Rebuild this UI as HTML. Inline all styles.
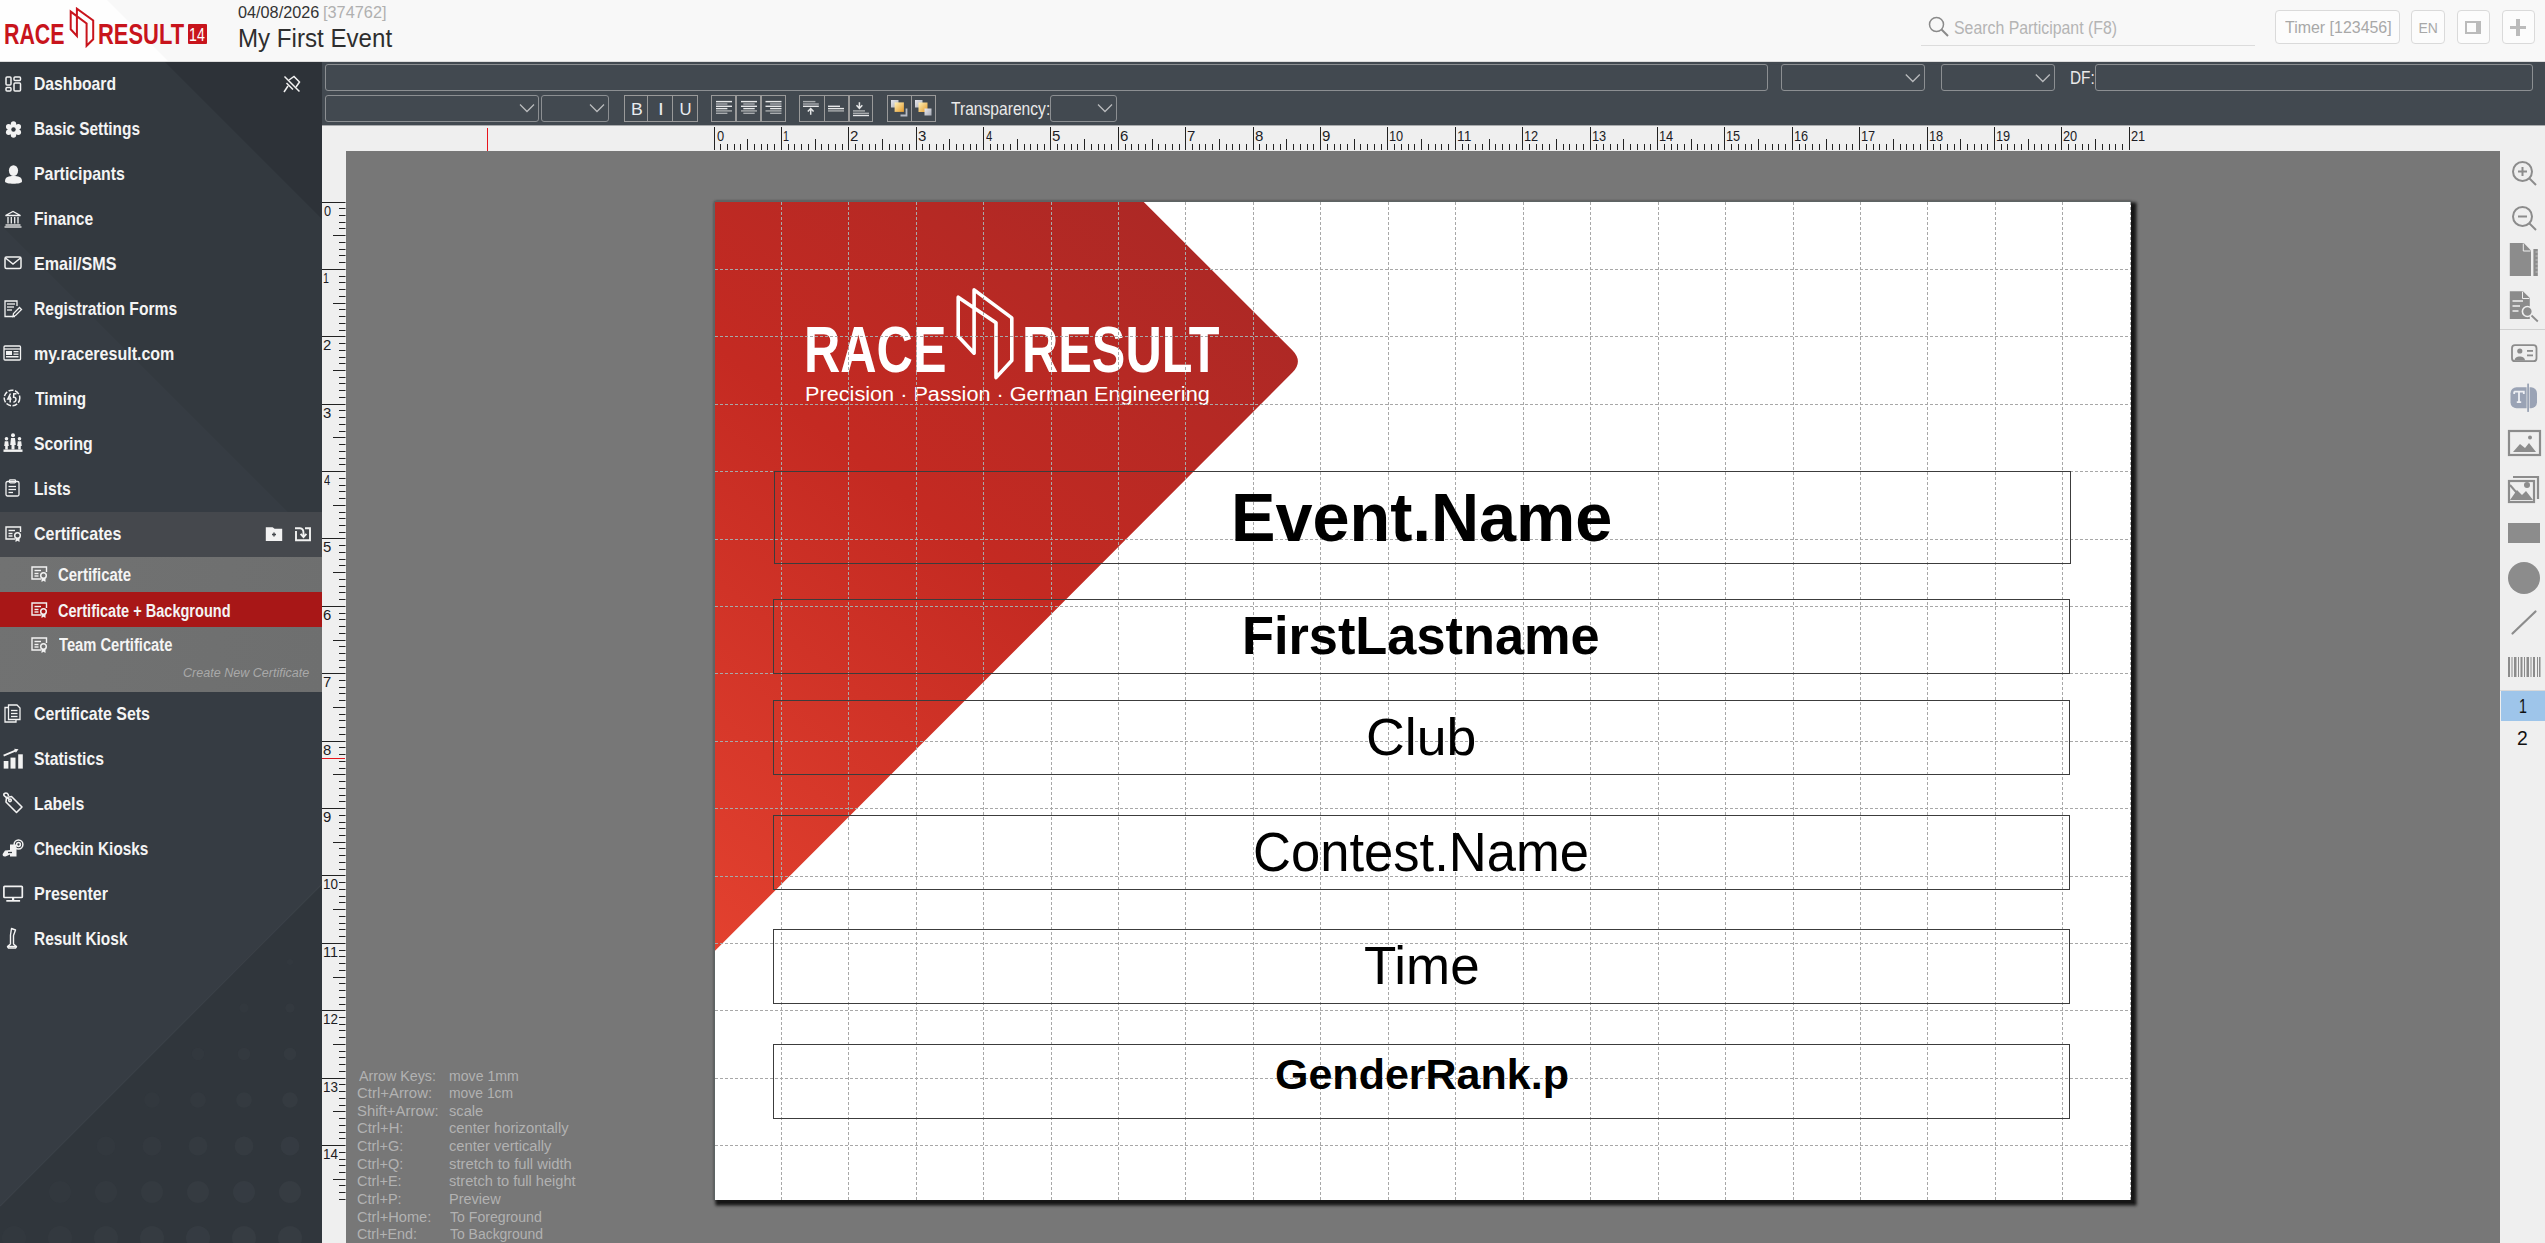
<!DOCTYPE html><html><head><meta charset="utf-8"><title>RACE RESULT</title><style>
*{margin:0;padding:0;box-sizing:border-box}
html,body{width:2545px;height:1243px;overflow:hidden;background:#777}
body{position:relative;font-family:"Liberation Sans",sans-serif}
.t{position:absolute;white-space:nowrap;line-height:1;transform-origin:0 0}
.a{position:absolute}
svg{position:absolute;overflow:visible}
</style></head><body>
<div class="a" style="left:0;top:0;width:2545px;height:62px;background:#f8f8f8;border-bottom:1px solid #dcdcdc"></div>
<svg style="left:0;top:0" width="1" height="1"><path d="M0,0 L107,0 L168,61 L0,61 Z" fill="#fefefe"/></svg>
<div class="t" style="left:3.82px;top:19.80px;font-size:28.78px;font-weight:bold;color:#c8141c;transform:scaleX(0.7418);">RACE</div>
<div class="t" style="left:97.78px;top:19.80px;font-size:28.78px;font-weight:bold;color:#c8141c;transform:scaleX(0.7622);">RESULT</div>
<div class="a" style="left:188px;top:24px;width:19px;height:20px;background:#c8141c;border-radius:1px"></div>
<div class="t" style="left:188.75px;top:26.00px;font-size:18.9px;color:#fff;transform:scaleX(0.7500);">14</div>
<svg style="left:0;top:0" width="1" height="1"><path d="M70.7,11.6 L70.7,29.3 L76.9,36 L76.9,8.6 L93.2,20.5 L93.2,39.3 L86.6,45.8 L86.6,23.5 Z" fill="none" stroke="#c8141c" stroke-width="2" stroke-linejoin="miter"/></svg>
<div class="t" style="left:237.92px;top:4.90px;font-size:16.57px;color:#333;transform:scaleX(0.9802);">04/08/2026</div>
<div class="t" style="left:323.01px;top:4.90px;font-size:16.57px;color:#b0b0b0;transform:scaleX(0.9855);">[374762]</div>
<div class="t" style="left:237.99px;top:25.20px;font-size:26.6px;color:#2e2e2e;transform:scaleX(0.9071);">My First Event</div>
<svg style="left:0;top:0" width="1" height="1"><circle cx="1936.5" cy="24.5" r="7" fill="none" stroke="#8a8a8a" stroke-width="1.5"/><line x1="1941.5" y1="29.5" x2="1948" y2="36" stroke="#8a8a8a" stroke-width="2"/></svg>
<div class="t" style="left:1954.39px;top:20.00px;font-size:17.44px;color:#b4b4b4;transform:scaleX(0.9096);">Search Participant (F8)</div>
<div class="a" style="left:1921px;top:44.5px;width:334px;height:1px;background:#dcdcdc"></div>
<div class="a" style="left:2274.5px;top:10px;width:125.0px;height:33.5px;border:1px solid #dadada;border-radius:4px;background:#fcfcfc"></div>
<div class="a" style="left:2411px;top:10px;width:33.5px;height:33.5px;border:1px solid #dadada;border-radius:4px;background:#fcfcfc"></div>
<div class="a" style="left:2456.5px;top:10px;width:33.5px;height:33.5px;border:1px solid #dadada;border-radius:4px;background:#fcfcfc"></div>
<div class="a" style="left:2501.5px;top:10px;width:33.0px;height:33.5px;border:1px solid #dadada;border-radius:4px;background:#fcfcfc"></div>
<div class="t" style="left:2285.20px;top:19.00px;font-size:17.01px;color:#a8a8a8;transform:scaleX(0.9381);">Timer [123456]</div>
<div class="t" style="left:2418.50px;top:22.00px;font-size:13.95px;color:#a8a8a8;">EN</div>
<div class="a" style="left:2465px;top:21px;width:15.5px;height:12.5px;border:2px solid #bbb;border-right-width:5px"></div>
<div class="a" style="left:2510px;top:25.8px;width:16px;height:3.4px;background:#bbb"></div><div class="a" style="left:2516.3px;top:19px;width:3.4px;height:16.5px;background:#bbb"></div>
<svg style="left:0;top:62px" width="322" height="1181" viewBox="0 0 322 1181"><rect width="322" height="1181" fill="#33393f"/><path d="M165,0 L322,0 L322,157 Z" fill="#2d3238"/><path d="M0,162 L322,484 L322,1181 L0,1181 Z" fill="#363c43"/><path d="M0,1144 L322,822 L322,1181 L0,1181 Z" fill="#30363c"/><path d="M0,1144 L322,822" stroke="#3b4148" stroke-width="1.2"/><circle cx="290" cy="900" r="3.0" fill="#363c42" fill-opacity="0.47"/><circle cx="290" cy="946" r="4.6" fill="#363c42" fill-opacity="0.59"/><circle cx="244" cy="946" r="4.6" fill="#363c42" fill-opacity="0.47"/><circle cx="290" cy="992" r="6.2" fill="#363c42" fill-opacity="0.71"/><circle cx="244" cy="992" r="6.2" fill="#363c42" fill-opacity="0.59"/><circle cx="198" cy="992" r="6.2" fill="#363c42" fill-opacity="0.47"/><circle cx="290" cy="1038" r="7.8" fill="#363c42" fill-opacity="0.83"/><circle cx="244" cy="1038" r="7.8" fill="#363c42" fill-opacity="0.71"/><circle cx="198" cy="1038" r="7.8" fill="#363c42" fill-opacity="0.59"/><circle cx="152" cy="1038" r="7.8" fill="#363c42" fill-opacity="0.47"/><circle cx="290" cy="1084" r="9.4" fill="#363c42" fill-opacity="0.95"/><circle cx="244" cy="1084" r="9.4" fill="#363c42" fill-opacity="0.83"/><circle cx="198" cy="1084" r="9.4" fill="#363c42" fill-opacity="0.71"/><circle cx="152" cy="1084" r="9.4" fill="#363c42" fill-opacity="0.59"/><circle cx="106" cy="1084" r="9.4" fill="#363c42" fill-opacity="0.47"/><circle cx="290" cy="1130" r="11.0" fill="#363c42" fill-opacity="1.00"/><circle cx="244" cy="1130" r="11.0" fill="#363c42" fill-opacity="0.95"/><circle cx="198" cy="1130" r="11.0" fill="#363c42" fill-opacity="0.83"/><circle cx="152" cy="1130" r="11.0" fill="#363c42" fill-opacity="0.71"/><circle cx="106" cy="1130" r="11.0" fill="#363c42" fill-opacity="0.59"/><circle cx="60" cy="1130" r="11.0" fill="#363c42" fill-opacity="0.47"/><circle cx="290" cy="1176" r="12.0" fill="#363c42" fill-opacity="1.00"/><circle cx="244" cy="1176" r="12.0" fill="#363c42" fill-opacity="1.00"/><circle cx="198" cy="1176" r="12.0" fill="#363c42" fill-opacity="0.95"/><circle cx="152" cy="1176" r="12.0" fill="#363c42" fill-opacity="0.83"/><circle cx="106" cy="1176" r="12.0" fill="#363c42" fill-opacity="0.71"/><circle cx="60" cy="1176" r="12.0" fill="#363c42" fill-opacity="0.59"/><circle cx="14" cy="1176" r="12.0" fill="#363c42" fill-opacity="0.47"/></svg>
<div class="a" style="left:0;top:512px;width:322px;height:45px;background:#45484d"></div>
<div class="a" style="left:0;top:557px;width:322px;height:135px;background:linear-gradient(100deg,#717272 0,#6e6f6f 100%)"></div>
<div class="a" style="left:0;top:592px;width:322px;height:35px;background:#a81717"></div>
<div class="t" style="left:34.31px;top:76.00px;font-size:17.73px;font-weight:bold;color:#f4f4f4;transform:scaleX(0.8868);">Dashboard</div>
<div class="t" style="left:34.33px;top:121.00px;font-size:17.73px;font-weight:bold;color:#f4f4f4;transform:scaleX(0.8678);">Basic Settings</div>
<div class="t" style="left:34.30px;top:166.00px;font-size:17.73px;font-weight:bold;color:#f4f4f4;transform:scaleX(0.8960);">Participants</div>
<div class="t" style="left:34.32px;top:211.00px;font-size:17.73px;font-weight:bold;color:#f4f4f4;transform:scaleX(0.8831);">Finance</div>
<div class="t" style="left:34.29px;top:256.00px;font-size:17.73px;font-weight:bold;color:#f4f4f4;transform:scaleX(0.9101);">Email/SMS</div>
<div class="t" style="left:34.32px;top:301.00px;font-size:17.73px;font-weight:bold;color:#f4f4f4;transform:scaleX(0.8807);">Registration Forms</div>
<div class="t" style="left:34.30px;top:346.00px;font-size:17.73px;font-weight:bold;color:#f4f4f4;transform:scaleX(0.9039);">my.raceresult.com</div>
<div class="t" style="left:35.20px;top:391.00px;font-size:17.73px;font-weight:bold;color:#f4f4f4;transform:scaleX(0.8860);">Timing</div>
<div class="t" style="left:34.31px;top:436.00px;font-size:17.73px;font-weight:bold;color:#f4f4f4;transform:scaleX(0.8906);">Scoring</div>
<div class="t" style="left:34.32px;top:481.00px;font-size:17.73px;font-weight:bold;color:#f4f4f4;transform:scaleX(0.8850);">Lists</div>
<div class="t" style="left:34.29px;top:526.00px;font-size:17.73px;font-weight:bold;color:#f4f4f4;transform:scaleX(0.9053);">Certificates</div>
<div class="t" style="left:34.30px;top:706.00px;font-size:17.73px;font-weight:bold;color:#f4f4f4;transform:scaleX(0.8984);">Certificate Sets</div>
<div class="t" style="left:34.31px;top:751.00px;font-size:17.73px;font-weight:bold;color:#f4f4f4;transform:scaleX(0.8870);">Statistics</div>
<div class="t" style="left:34.30px;top:796.00px;font-size:17.73px;font-weight:bold;color:#f4f4f4;transform:scaleX(0.8964);">Labels</div>
<div class="t" style="left:34.33px;top:841.00px;font-size:17.73px;font-weight:bold;color:#f4f4f4;transform:scaleX(0.8669);">Checkin Kiosks</div>
<div class="t" style="left:34.30px;top:886.00px;font-size:17.73px;font-weight:bold;color:#f4f4f4;transform:scaleX(0.9049);">Presenter</div>
<div class="t" style="left:34.33px;top:931.00px;font-size:17.73px;font-weight:bold;color:#f4f4f4;transform:scaleX(0.8708);">Result Kiosk</div>
<div class="t" style="left:58.04px;top:566.50px;font-size:17.44px;font-weight:bold;color:#f4f4f4;transform:scaleX(0.8571);">Certificate</div>
<div class="t" style="left:58.07px;top:602.50px;font-size:17.44px;font-weight:bold;color:#f4f4f4;transform:scaleX(0.8341);">Certificate + Background</div>
<div class="t" style="left:58.90px;top:637.00px;font-size:17.44px;font-weight:bold;color:#f4f4f4;transform:scaleX(0.8433);">Team Certificate</div>
<div class="t" style="left:183.04px;top:666.00px;font-size:13.08px;font-style:italic;color:#a9a9a9;transform:scaleX(0.9592);">Create New Certificate</div>
<svg style="left:5px;top:76px" width="17" height="16" viewBox="0 0 17 16"><g fill="none" stroke="#f2f2f2" stroke-width="1.5"><rect x="1" y="1" width="5" height="8" rx="1"/><rect x="1" y="11.5" width="5" height="3.5" rx="1"/><rect x="9" y="1" width="6.5" height="3.5" rx="1"/><rect x="9" y="7" width="6.5" height="8" rx="1"/></g></svg>
<svg style="left:5px;top:121px" width="17" height="17" viewBox="0 0 17 17"><g fill="#f2f2f2"><circle cx="8.5" cy="8.5" r="5.8"/><circle cx="8.50" cy="2.90" r="2.7"/><circle cx="13.35" cy="5.70" r="2.7"/><circle cx="13.35" cy="11.30" r="2.7"/><circle cx="8.50" cy="14.10" r="2.7"/><circle cx="3.65" cy="11.30" r="2.7"/><circle cx="3.65" cy="5.70" r="2.7"/></g><circle cx="8.5" cy="8.5" r="2.2" fill="#33393f"/></svg>
<svg style="left:4px;top:165px" width="19" height="20" viewBox="0 0 19 20"><g fill="#f2f2f2"><ellipse cx="9.5" cy="5.6" rx="4.6" ry="5.4"/><path d="M1,16.5 C1,11.5 5,11 9.5,11 C14,11 18,11.5 18,16.5 C18,19.5 1,19.5 1,16.5Z"/></g></svg>
<svg style="left:4px;top:210px" width="18" height="18" viewBox="0 0 18 18"><g fill="none" stroke="#f2f2f2" stroke-width="1.3"><path d="M1.5,5.5 L9,1.5 L16.5,5.5 Z"/><line x1="4" y1="7" x2="4" y2="13.5"/><line x1="7.3" y1="7" x2="7.3" y2="13.5"/><line x1="10.7" y1="7" x2="10.7" y2="13.5"/><line x1="14" y1="7" x2="14" y2="13.5"/><line x1="1.5" y1="15" x2="16.5" y2="15"/><line x1="0.5" y1="17" x2="17.5" y2="17"/></g></svg>
<svg style="left:4px;top:256px" width="18" height="14" viewBox="0 0 18 14"><g fill="none" stroke="#f2f2f2" stroke-width="1.5"><rect x="1" y="1" width="16" height="11.5" rx="1.5"/><path d="M1.5,2 L9,8 L16.5,2"/></g></svg>
<svg style="left:4px;top:300px" width="18" height="18" viewBox="0 0 18 18"><g fill="none" stroke="#f2f2f2" stroke-width="1.3"><path d="M11,16.5 L1,16.5 L1,1 L13,1 L13,6"/><line x1="3" y1="4" x2="11" y2="4"/><line x1="3" y1="7" x2="10" y2="7"/><line x1="3" y1="10" x2="8" y2="10"/><path d="M9,16.5 L9.5,13.5 L15.5,7.5 L17.5,9.5 L11.5,15.5 Z"/></g></svg>
<svg style="left:3px;top:345px" width="18" height="16" viewBox="0 0 18 16"><g fill="none" stroke="#f2f2f2" stroke-width="1.3"><rect x="1" y="1" width="16.5" height="14" rx="1"/><line x1="1" y1="4" x2="17.5" y2="4"/></g><g fill="#f2f2f2"><rect x="3" y="6" width="6" height="4"/><rect x="10.5" y="6" width="5" height="1.3"/><rect x="10.5" y="8.5" width="5" height="1.3"/><rect x="3" y="11" width="12.5" height="1.5"/></g></svg>
<svg style="left:3px;top:389px" width="18" height="18" viewBox="0 0 18 18"><g fill="none" stroke="#f2f2f2" stroke-width="1.5"><circle cx="9" cy="9" r="7.8" stroke-dasharray="5 1.6"/><path d="M7.5,4.5 L4.8,10 L8.5,10 M7.2,7.5 L7.2,13.5 M13.5,4.8 L10.8,4.8 L10.6,8.2 C13.8,7.6 13.8,13.2 10.4,13"/></g></svg>
<svg style="left:3px;top:433px" width="20" height="20" viewBox="0 0 20 20"><g fill="#f2f2f2"><rect x="0.5" y="16.5" width="19" height="2.4"/><circle cx="10" cy="2.3" r="2"/><path d="M8,5 L12,5 L12.8,12 L11.5,12 L11.5,16.5 L8.5,16.5 L8.5,12 L7.2,12 Z"/><circle cx="3.5" cy="5.8" r="1.8"/><path d="M1.8,8.3 L5.2,8.3 L5.8,13 L4.8,13 L4.8,16.5 L2.2,16.5 L2.2,13 L1.2,13 Z"/><circle cx="16.5" cy="5.8" r="1.8"/><path d="M14.8,8.3 L18.2,8.3 L18.8,13 L17.8,13 L17.8,16.5 L15.2,16.5 L15.2,13 L14.2,13 Z"/></g></svg>
<svg style="left:5px;top:479px" width="16" height="18" viewBox="0 0 16 18"><g fill="none" stroke="#f2f2f2" stroke-width="1.3"><rect x="1" y="2.5" width="13" height="14.5" rx="1.5"/><rect x="4.5" y="0.8" width="6" height="3" rx="0.8"/><line x1="3.5" y1="7.5" x2="11" y2="7.5"/><line x1="3.5" y1="10.5" x2="11" y2="10.5"/><line x1="3.5" y1="13.5" x2="8" y2="13.5"/></g></svg>
<svg style="left:5px;top:526px" width="17" height="16" viewBox="0 0 17 16"><g transform="scale(1.0)"><g fill="none" stroke="#f2f2f2" stroke-width="1.4"><path d="M10,13 L1,13 L1,1 L15.5,1 L15.5,6"/><line x1="3.5" y1="4.5" x2="10" y2="4.5"/><line x1="3.5" y1="7.5" x2="7.5" y2="7.5"/><line x1="3.5" y1="10" x2="7.5" y2="10"/></g><circle cx="12.5" cy="9.5" r="2.8" fill="none" stroke="#f2f2f2" stroke-width="1.5"/><path d="M10.5,12 L10.5,16 L12.5,14.8 L14.5,16 L14.5,12" fill="#f2f2f2"/></g></svg>
<svg style="left:31px;top:566px" width="17" height="16" viewBox="0 0 17 16"><g transform="scale(1.0)"><g fill="none" stroke="#f2f2f2" stroke-width="1.4"><path d="M10,13 L1,13 L1,1 L15.5,1 L15.5,6"/><line x1="3.5" y1="4.5" x2="10" y2="4.5"/><line x1="3.5" y1="7.5" x2="7.5" y2="7.5"/><line x1="3.5" y1="10" x2="7.5" y2="10"/></g><circle cx="12.5" cy="9.5" r="2.8" fill="none" stroke="#f2f2f2" stroke-width="1.5"/><path d="M10.5,12 L10.5,16 L12.5,14.8 L14.5,16 L14.5,12" fill="#f2f2f2"/></g></svg>
<svg style="left:31px;top:602px" width="17" height="16" viewBox="0 0 17 16"><g transform="scale(1.0)"><g fill="none" stroke="#f2f2f2" stroke-width="1.4"><path d="M10,13 L1,13 L1,1 L15.5,1 L15.5,6"/><line x1="3.5" y1="4.5" x2="10" y2="4.5"/><line x1="3.5" y1="7.5" x2="7.5" y2="7.5"/><line x1="3.5" y1="10" x2="7.5" y2="10"/></g><circle cx="12.5" cy="9.5" r="2.8" fill="none" stroke="#f2f2f2" stroke-width="1.5"/><path d="M10.5,12 L10.5,16 L12.5,14.8 L14.5,16 L14.5,12" fill="#f2f2f2"/></g></svg>
<svg style="left:31px;top:637px" width="17" height="16" viewBox="0 0 17 16"><g transform="scale(1.0)"><g fill="none" stroke="#f2f2f2" stroke-width="1.4"><path d="M10,13 L1,13 L1,1 L15.5,1 L15.5,6"/><line x1="3.5" y1="4.5" x2="10" y2="4.5"/><line x1="3.5" y1="7.5" x2="7.5" y2="7.5"/><line x1="3.5" y1="10" x2="7.5" y2="10"/></g><circle cx="12.5" cy="9.5" r="2.8" fill="none" stroke="#f2f2f2" stroke-width="1.5"/><path d="M10.5,12 L10.5,16 L12.5,14.8 L14.5,16 L14.5,12" fill="#f2f2f2"/></g></svg>
<svg style="left:265px;top:526px" width="19" height="17" viewBox="0 0 19 17"><path d="M0.8,1.2 L7.6,1.2 L9.6,2.8 L17.2,2.8 L17.2,15 L0.8,15 Z" fill="#f2f2f2"/><path d="M9,6.5 L9,10.5 M7,8.5 L11,8.5" stroke="#45484d" stroke-width="1.4"/></svg>
<svg style="left:294px;top:526px" width="18" height="17" viewBox="0 0 18 17"><g fill="none" stroke="#f2f2f2" stroke-width="1.9"><path d="M2,5 L2,14.3 L16,14.3 L16,2.3 L11,2.3"/><path d="M1,2.3 L6,2.3 C8.5,2.3 9.5,4 9.5,7 L9.5,10"/><path d="M6.6,7.8 L9.5,11 L12.4,7.8"/></g></svg>
<svg style="left:4px;top:704px" width="18" height="19" viewBox="0 0 18 19"><g fill="none" stroke="#f2f2f2" stroke-width="1.3"><path d="M4,3.5 L1,3.5 L1,18 L12,18 L12,16"/><path d="M4.5,1 L13,1 L16,4 L16,15.5 L4.5,15.5 Z"/><line x1="7" y1="6.5" x2="13.5" y2="6.5"/><line x1="7" y1="9.5" x2="13.5" y2="9.5"/><line x1="7" y1="12.5" x2="13.5" y2="12.5"/></g></svg>
<svg style="left:0px;top:745px" width="26" height="26" viewBox="0 0 26 26"><g fill="#f2f2f2"><rect x="3.7" y="16" width="4.7" height="7.6"/><rect x="10.5" y="12.6" width="5" height="11"/><rect x="18.2" y="9.3" width="4.6" height="14.3"/><path d="M14.2,3.8 L18.5,4.2 L15.8,7.8 Z"/></g><path d="M3.6,10.6 L16,5.4" stroke="#f2f2f2" stroke-width="1.7" fill="none"/></svg>
<svg style="left:0px;top:790px" width="26" height="26" viewBox="0 0 26 26"><g fill="none" stroke="#f2f2f2" stroke-width="1.6" stroke-linejoin="round"><path d="M6.5,7.5 L11.5,6.5 L22,17 L16.5,22.5 L6,12 Z"/><circle cx="10" cy="10.3" r="1.3"/><path d="M9,9 C5,7 2.5,5 4.5,3.5 C6.5,2 8.5,4 8.5,6"/></g></svg>
<svg style="left:0px;top:835px" width="26" height="26" viewBox="0 0 26 26"><g fill="#f2f2f2"><path d="M10,9.5 L16.5,9.5 L16.5,21.5 L10,21.5 L10,19.5 L5.5,21.5 C3,22 2,20 3,18.5 L5,15.5 L10,15 Z"/></g><g fill="none" stroke="#f2f2f2" stroke-width="1.5"><circle cx="18.5" cy="9.5" r="4.4"/><circle cx="18.5" cy="9.5" r="1.9"/></g><path d="M8,17.5 L12,17.5" stroke="#33393f" stroke-width="1.3"/></svg>
<svg style="left:0px;top:880px" width="26" height="26" viewBox="0 0 26 26"><g fill="none" stroke="#f2f2f2" stroke-width="1.7"><rect x="3.9" y="6.3" width="18.4" height="11.2" rx="0.8"/></g><g fill="#f2f2f2"><rect x="12" y="17.5" width="2.2" height="3"/><rect x="6.3" y="20" width="13.8" height="1.7"/></g></svg>
<svg style="left:0px;top:925px" width="26" height="26" viewBox="0 0 26 26"><g fill="none" stroke="#f2f2f2" stroke-width="1.4" stroke-linejoin="round"><path d="M11.5,3.5 L15.5,5 L13.5,10.5 L13.5,19 L16.5,21.5 L7.5,21.5 L10.5,19 L10.5,10 Z"/><path d="M7.5,21.5 L8.5,23 L15.5,23 L16.5,21.5"/></g></svg>
<svg style="left:283px;top:75px" width="18" height="18" viewBox="0 0 18 18"><g fill="none" stroke="#f2f2f2" stroke-width="1.5"><path d="M6,5 L11,1.5 L16.5,7 L13,12"/><path d="M3.5,8 L10,14.5"/><path d="M5,11 L1,17"/><line x1="1.5" y1="1.5" x2="16.5" y2="16.5"/></g></svg>
<div class="a" style="left:322px;top:62px;width:2223px;height:63px;background:#424950"></div>
<div class="a" style="left:325px;top:64px;width:1443px;height:26.700000000000003px;border:1px solid #8c8f92;border-radius:3px;background:#424950"></div>
<div class="a" style="left:1781px;top:64px;width:144px;height:26.700000000000003px;border:1px solid #8c8f92;border-radius:3px;background:#424950"></div>
<svg style="left:0;top:0" width="1" height="1"><path d="M1905.8,74.5 L1912.8,81.5 L1919.8,74.5" fill="none" stroke="#b9bbbd" stroke-width="1.3"/></svg>
<div class="a" style="left:1941px;top:64px;width:114px;height:26.700000000000003px;border:1px solid #8c8f92;border-radius:3px;background:#424950"></div>
<svg style="left:0;top:0" width="1" height="1"><path d="M2035.8,74.5 L2042.8,81.5 L2049.8,74.5" fill="none" stroke="#b9bbbd" stroke-width="1.3"/></svg>
<div class="t" style="left:2069.63px;top:70.10px;font-size:17.73px;color:#eaeaea;transform:scaleX(0.8654);">DF:</div>
<div class="a" style="left:2095px;top:64px;width:438px;height:26.700000000000003px;border:1px solid #8c8f92;border-radius:3px;background:#424950"></div>
<div class="a" style="left:325px;top:95.2px;width:213.5px;height:26.599999999999994px;border:1px solid #8c8f92;border-radius:3px;background:#424950"></div>
<svg style="left:0;top:0" width="1" height="1"><path d="M520.0,104.5 L527,111.5 L534.0,104.5" fill="none" stroke="#b9bbbd" stroke-width="1.3"/></svg>
<div class="a" style="left:541px;top:95.2px;width:68px;height:26.599999999999994px;border:1px solid #8c8f92;border-radius:3px;background:#424950"></div>
<svg style="left:0;top:0" width="1" height="1"><path d="M590.0,104.5 L597,111.5 L604.0,104.5" fill="none" stroke="#b9bbbd" stroke-width="1.3"/></svg>
<div class="a" style="left:624.4px;top:95.2px;width:73.39999999999998px;height:26.599999999999994px;border:1px solid #9a9a9a;border-radius:0px;background:#424950"></div>
<div class="a" style="left:646.9000000000001px;top:95.2px;width:1.6px;height:26.6px;background:#9a9a9a"></div>
<div class="a" style="left:671.7px;top:95.2px;width:1.6px;height:26.6px;background:#9a9a9a"></div>
<div class="a" style="left:711px;top:95.2px;width:75px;height:26.599999999999994px;border:1px solid #9a9a9a;border-radius:0px;background:#424950"></div>
<div class="a" style="left:735.2px;top:95.2px;width:1.6px;height:26.6px;background:#9a9a9a"></div>
<div class="a" style="left:760.0px;top:95.2px;width:1.6px;height:26.6px;background:#9a9a9a"></div>
<div class="a" style="left:799px;top:95.2px;width:73.70000000000005px;height:26.599999999999994px;border:1px solid #9a9a9a;border-radius:0px;background:#424950"></div>
<div class="a" style="left:823.5px;top:95.2px;width:1.6px;height:26.6px;background:#9a9a9a"></div>
<div class="a" style="left:848.0px;top:95.2px;width:1.6px;height:26.6px;background:#9a9a9a"></div>
<div class="a" style="left:887px;top:95.2px;width:49px;height:26.599999999999994px;border:1px solid #9a9a9a;border-radius:0px;background:#424950"></div>
<div class="a" style="left:910.9000000000001px;top:95.2px;width:1.6px;height:26.6px;background:#9a9a9a"></div>
<div class="t" style="left:630.74px;top:101.50px;font-size:16.72px;color:#e8ecf0;transform:scaleX(1.0556);">B</div>
<div class="t" style="left:657.75px;top:101.50px;font-size:16.72px;color:#e8ecf0;transform:scaleX(1.2500);">I</div>
<div class="t" style="left:679.50px;top:101.50px;font-size:16.72px;color:#e8ecf0;">U</div>
<svg style="left:0;top:0" width="1" height="1"><rect x="716" y="100.90" width="16" height="1.4" fill="#e6e7e8"/><rect x="741" y="100.90" width="16" height="1.4" fill="#e6e7e8"/><rect x="765.5" y="100.90" width="16" height="1.4" fill="#e6e7e8"/><rect x="716" y="103.30" width="11.4" height="1.4" fill="#a9acaf"/><rect x="743.3" y="103.30" width="11.4" height="1.4" fill="#a9acaf"/><rect x="770.1" y="103.30" width="11.4" height="1.4" fill="#a9acaf"/><rect x="716" y="105.60" width="16" height="1.4" fill="#e6e7e8"/><rect x="741" y="105.60" width="16" height="1.4" fill="#e6e7e8"/><rect x="765.5" y="105.60" width="16" height="1.4" fill="#e6e7e8"/><rect x="716" y="107.90" width="11.4" height="1.4" fill="#e6e7e8"/><rect x="743.3" y="107.90" width="11.4" height="1.4" fill="#e6e7e8"/><rect x="770.1" y="107.90" width="11.4" height="1.4" fill="#e6e7e8"/><rect x="716" y="110.20" width="16" height="1.4" fill="#a9acaf"/><rect x="741" y="110.20" width="16" height="1.4" fill="#a9acaf"/><rect x="765.5" y="110.20" width="16" height="1.4" fill="#a9acaf"/><rect x="716" y="112.60" width="11.4" height="1.4" fill="#a9acaf"/><rect x="743.3" y="112.60" width="11.4" height="1.4" fill="#a9acaf"/><rect x="770.1" y="112.60" width="11.4" height="1.4" fill="#a9acaf"/><rect x="803" y="100.90" width="12.4" height="1.4" fill="#a9acaf"/><rect x="803" y="103.30" width="15.8" height="1.4" fill="#a9acaf"/><rect x="803" y="105.60" width="15.8" height="1.4" fill="#e6e7e8"/><path d="M810.7,114.7 V109 M807.8,111.6 L810.7,108.6 L813.6,111.6" stroke="#e6e7e8" stroke-width="1.5" fill="none"/><rect x="828" y="105.60" width="12" height="1.4" fill="#e6e7e8"/><rect x="828" y="107.90" width="16" height="1.4" fill="#e6e7e8"/><rect x="828" y="110.20" width="16" height="1.4" fill="#a9acaf"/><path d="M859.4,102.3 V108 M856.5,105.3 L859.4,108.3 L862.3,105.3" stroke="#e6e7e8" stroke-width="1.5" fill="none"/><rect x="853" y="110.20" width="12" height="1.4" fill="#a9acaf"/><rect x="853" y="112.60" width="16" height="1.4" fill="#a9acaf"/><rect x="853" y="114.80" width="16" height="1.4" fill="#e6e7e8"/></svg>
<svg style="left:0;top:0" width="1" height="1"><defs><linearGradient id="yg" x1="0" y1="0" x2="1" y2="1"><stop offset="0" stop-color="#fff2bb"/><stop offset="1" stop-color="#e49a2a"/></linearGradient><linearGradient id="gg" x1="0" y1="0" x2="1" y2="1"><stop offset="0" stop-color="#e8e8ec"/><stop offset="1" stop-color="#a9adb8"/></linearGradient></defs><rect x="891" y="100" width="7.5" height="7.5" fill="url(#gg)"/><rect x="894.6" y="102.4" width="9.3" height="9.5" fill="url(#yg)"/><path d="M900.5,115.5 L906.5,115.5 L906.5,108.5" stroke="#b8bcc6" stroke-width="1.8" fill="none"/><rect x="915" y="100" width="7.5" height="7.5" fill="url(#gg)"/><rect x="918.5" y="102.5" width="9" height="9.5" fill="url(#yg)"/><rect x="924.5" y="108.5" width="7" height="7" fill="url(#gg)"/></svg>
<div class="t" style="left:951.00px;top:100.60px;font-size:17.44px;color:#eaeaea;transform:scaleX(0.8954);">Transparency:</div>
<div class="a" style="left:1050.3px;top:95.2px;width:67.20000000000005px;height:26.599999999999994px;border:1px solid #8c8f92;border-radius:3px;background:#424950"></div>
<svg style="left:0;top:0" width="1" height="1"><path d="M1098.0,104.5 L1105,111.5 L1112.0,104.5" fill="none" stroke="#b9bbbd" stroke-width="1.3"/></svg>
<div class="a" style="left:322px;top:125px;width:2223px;height:26px;background:#efefef"></div>
<div class="a" style="left:322px;top:151px;width:24px;height:1092px;background:#efefef"></div>
<div class="a" style="left:2500px;top:151px;width:45px;height:1092px;background:#efefef"></div>
<svg style="left:0;top:0" width="1" height="1"><path d="M714.5,127V150M720.5,144V150M727.5,144V150M734.5,144V150M740.5,144V150M747.5,139V150M754.5,144V150M761.5,144V150M767.5,144V150M774.5,144V150M781.5,127V150M788.5,144V150M794.5,144V150M801.5,144V150M808.5,144V150M815.5,139V150M821.5,144V150M828.5,144V150M835.5,144V150M842.5,144V150M848.5,127V150M855.5,144V150M862.5,144V150M869.5,144V150M875.5,144V150M882.5,139V150M889.5,144V150M895.5,144V150M902.5,144V150M909.5,144V150M916.5,127V150M922.5,144V150M929.5,144V150M936.5,144V150M943.5,144V150M949.5,139V150M956.5,144V150M963.5,144V150M970.5,144V150M976.5,144V150M983.5,127V150M990.5,144V150M997.5,144V150M1003.5,144V150M1010.5,144V150M1017.5,139V150M1024.5,144V150M1030.5,144V150M1037.5,144V150M1044.5,144V150M1050.5,127V150M1057.5,144V150M1064.5,144V150M1071.5,144V150M1077.5,144V150M1084.5,139V150M1091.5,144V150M1098.5,144V150M1104.5,144V150M1111.5,144V150M1118.5,127V150M1125.5,144V150M1131.5,144V150M1138.5,144V150M1145.5,144V150M1152.5,139V150M1158.5,144V150M1165.5,144V150M1172.5,144V150M1179.5,144V150M1185.5,127V150M1192.5,144V150M1199.5,144V150M1205.5,144V150M1212.5,144V150M1219.5,139V150M1226.5,144V150M1232.5,144V150M1239.5,144V150M1246.5,144V150M1253.5,127V150M1259.5,144V150M1266.5,144V150M1273.5,144V150M1280.5,144V150M1286.5,139V150M1293.5,144V150M1300.5,144V150M1307.5,144V150M1313.5,144V150M1320.5,127V150M1327.5,144V150M1334.5,144V150M1340.5,144V150M1347.5,144V150M1354.5,139V150M1360.5,144V150M1367.5,144V150M1374.5,144V150M1381.5,144V150M1387.5,127V150M1394.5,144V150M1401.5,144V150M1408.5,144V150M1414.5,144V150M1421.5,139V150M1428.5,144V150M1435.5,144V150M1441.5,144V150M1448.5,144V150M1455.5,127V150M1462.5,144V150M1468.5,144V150M1475.5,144V150M1482.5,144V150M1489.5,139V150M1495.5,144V150M1502.5,144V150M1509.5,144V150M1516.5,144V150M1522.5,127V150M1529.5,144V150M1536.5,144V150M1542.5,144V150M1549.5,144V150M1556.5,139V150M1563.5,144V150M1569.5,144V150M1576.5,144V150M1583.5,144V150M1590.5,127V150M1596.5,144V150M1603.5,144V150M1610.5,144V150M1617.5,144V150M1623.5,139V150M1630.5,144V150M1637.5,144V150M1644.5,144V150M1650.5,144V150M1657.5,127V150M1664.5,144V150M1671.5,144V150M1677.5,144V150M1684.5,144V150M1691.5,139V150M1697.5,144V150M1704.5,144V150M1711.5,144V150M1718.5,144V150M1724.5,127V150M1731.5,144V150M1738.5,144V150M1745.5,144V150M1751.5,144V150M1758.5,139V150M1765.5,144V150M1772.5,144V150M1778.5,144V150M1785.5,144V150M1792.5,127V150M1799.5,144V150M1805.5,144V150M1812.5,144V150M1819.5,144V150M1826.5,139V150M1832.5,144V150M1839.5,144V150M1846.5,144V150M1852.5,144V150M1859.5,127V150M1866.5,144V150M1873.5,144V150M1879.5,144V150M1886.5,144V150M1893.5,139V150M1900.5,144V150M1906.5,144V150M1913.5,144V150M1920.5,144V150M1927.5,127V150M1933.5,144V150M1940.5,144V150M1947.5,144V150M1954.5,144V150M1960.5,139V150M1967.5,144V150M1974.5,144V150M1981.5,144V150M1987.5,144V150M1994.5,127V150M2001.5,144V150M2007.5,144V150M2014.5,144V150M2021.5,144V150M2028.5,139V150M2034.5,144V150M2041.5,144V150M2048.5,144V150M2055.5,144V150M2061.5,127V150M2068.5,144V150M2075.5,144V150M2082.5,144V150M2088.5,144V150M2095.5,139V150M2102.5,144V150M2109.5,144V150M2115.5,144V150M2122.5,144V150M2129.5,127V150M322,202.5H345.5M339,208.5H345.5M339,215.5H345.5M339,222.5H345.5M339,228.5H345.5M333,235.5H345.5M339,242.5H345.5M339,249.5H345.5M339,255.5H345.5M339,262.5H345.5M322,269.5H345.5M339,276.5H345.5M339,282.5H345.5M339,289.5H345.5M339,296.5H345.5M333,303.5H345.5M339,309.5H345.5M339,316.5H345.5M339,323.5H345.5M339,330.5H345.5M322,336.5H345.5M339,343.5H345.5M339,350.5H345.5M339,357.5H345.5M339,363.5H345.5M333,370.5H345.5M339,377.5H345.5M339,383.5H345.5M339,390.5H345.5M339,397.5H345.5M322,404.5H345.5M339,410.5H345.5M339,417.5H345.5M339,424.5H345.5M339,431.5H345.5M333,437.5H345.5M339,444.5H345.5M339,451.5H345.5M339,458.5H345.5M339,464.5H345.5M322,471.5H345.5M339,478.5H345.5M339,485.5H345.5M339,491.5H345.5M339,498.5H345.5M333,505.5H345.5M339,512.5H345.5M339,518.5H345.5M339,525.5H345.5M339,532.5H345.5M322,538.5H345.5M339,545.5H345.5M339,552.5H345.5M339,559.5H345.5M339,565.5H345.5M333,572.5H345.5M339,579.5H345.5M339,586.5H345.5M339,592.5H345.5M339,599.5H345.5M322,606.5H345.5M339,613.5H345.5M339,619.5H345.5M339,626.5H345.5M339,633.5H345.5M333,640.5H345.5M339,646.5H345.5M339,653.5H345.5M339,660.5H345.5M339,667.5H345.5M322,673.5H345.5M339,680.5H345.5M339,687.5H345.5M339,693.5H345.5M339,700.5H345.5M333,707.5H345.5M339,714.5H345.5M339,720.5H345.5M339,727.5H345.5M339,734.5H345.5M322,741.5H345.5M339,747.5H345.5M339,754.5H345.5M339,761.5H345.5M339,768.5H345.5M333,774.5H345.5M339,781.5H345.5M339,788.5H345.5M339,795.5H345.5M339,801.5H345.5M322,808.5H345.5M339,815.5H345.5M339,822.5H345.5M339,828.5H345.5M339,835.5H345.5M333,842.5H345.5M339,848.5H345.5M339,855.5H345.5M339,862.5H345.5M339,869.5H345.5M322,875.5H345.5M339,882.5H345.5M339,889.5H345.5M339,896.5H345.5M339,902.5H345.5M333,909.5H345.5M339,916.5H345.5M339,923.5H345.5M339,929.5H345.5M339,936.5H345.5M322,943.5H345.5M339,950.5H345.5M339,956.5H345.5M339,963.5H345.5M339,970.5H345.5M333,977.5H345.5M339,983.5H345.5M339,990.5H345.5M339,997.5H345.5M339,1004.5H345.5M322,1010.5H345.5M339,1017.5H345.5M339,1024.5H345.5M339,1030.5H345.5M339,1037.5H345.5M333,1044.5H345.5M339,1051.5H345.5M339,1057.5H345.5M339,1064.5H345.5M339,1071.5H345.5M322,1078.5H345.5M339,1084.5H345.5M339,1091.5H345.5M339,1098.5H345.5M339,1105.5H345.5M333,1111.5H345.5M339,1118.5H345.5M339,1125.5H345.5M339,1132.5H345.5M339,1138.5H345.5M322,1145.5H345.5M339,1152.5H345.5M339,1159.5H345.5M339,1165.5H345.5M339,1172.5H345.5M333,1179.5H345.5M339,1185.5H345.5M339,1192.5H345.5M339,1199.5H345.5" stroke="#222" stroke-width="1" fill="none"/></svg>
<div class="a" style="left:487px;top:128px;width:1.2px;height:23px;background:#e8141c"></div>
<div class="a" style="left:322px;top:757.5px;width:23px;height:1.2px;background:#e8141c"></div>
<div class="t" style="left:716.80px;top:128.70px;font-size:14.1px;color:#1c1c24;transform:scaleX(0.9143);">0</div>
<div class="t" style="left:783.43px;top:128.70px;font-size:14.1px;color:#1c1c24;transform:scaleX(0.7667);">1</div>
<div class="t" style="left:850.13px;top:128.70px;font-size:14.1px;color:#1c1c24;transform:scaleX(1.0667);">2</div>
<div class="t" style="left:918.13px;top:128.70px;font-size:14.1px;color:#1c1c24;transform:scaleX(1.0667);">3</div>
<div class="t" style="left:986.20px;top:128.70px;font-size:14.1px;color:#1c1c24;transform:scaleX(0.8000);">4</div>
<div class="t" style="left:1052.13px;top:128.70px;font-size:14.1px;color:#1c1c24;transform:scaleX(1.0667);">5</div>
<div class="t" style="left:1120.13px;top:128.70px;font-size:14.1px;color:#1c1c24;transform:scaleX(1.0667);">6</div>
<div class="t" style="left:1187.13px;top:128.70px;font-size:14.1px;color:#1c1c24;transform:scaleX(1.0667);">7</div>
<div class="t" style="left:1255.13px;top:128.70px;font-size:14.1px;color:#1c1c24;transform:scaleX(1.0667);">8</div>
<div class="t" style="left:1322.13px;top:128.70px;font-size:14.1px;color:#1c1c24;transform:scaleX(1.0667);">9</div>
<div class="t" style="left:1389.29px;top:128.70px;font-size:14.1px;color:#1c1c24;transform:scaleX(0.9071);">10</div>
<div class="t" style="left:1457.22px;top:128.70px;font-size:14.1px;color:#1c1c24;transform:scaleX(0.9769);">11</div>
<div class="t" style="left:1524.29px;top:128.70px;font-size:14.1px;color:#1c1c24;transform:scaleX(0.9071);">12</div>
<div class="t" style="left:1592.29px;top:128.70px;font-size:14.1px;color:#1c1c24;transform:scaleX(0.9071);">13</div>
<div class="t" style="left:1659.29px;top:128.70px;font-size:14.1px;color:#1c1c24;transform:scaleX(0.9071);">14</div>
<div class="t" style="left:1726.29px;top:128.70px;font-size:14.1px;color:#1c1c24;transform:scaleX(0.9071);">15</div>
<div class="t" style="left:1794.29px;top:128.70px;font-size:14.1px;color:#1c1c24;transform:scaleX(0.9071);">16</div>
<div class="t" style="left:1861.29px;top:128.70px;font-size:14.1px;color:#1c1c24;transform:scaleX(0.9071);">17</div>
<div class="t" style="left:1929.29px;top:128.70px;font-size:14.1px;color:#1c1c24;transform:scaleX(0.9071);">18</div>
<div class="t" style="left:1996.29px;top:128.70px;font-size:14.1px;color:#1c1c24;transform:scaleX(0.9071);">19</div>
<div class="t" style="left:2063.29px;top:128.70px;font-size:14.1px;color:#1c1c24;transform:scaleX(0.9071);">20</div>
<div class="t" style="left:2131.29px;top:128.70px;font-size:14.1px;color:#1c1c24;transform:scaleX(0.9071);">21</div>
<div class="t" style="left:324.20px;top:204.90px;font-size:13.95px;color:#1c1c24;transform:scaleX(0.9143);">0</div>
<div class="t" style="left:323.43px;top:271.90px;font-size:13.95px;color:#1c1c24;transform:scaleX(0.7667);">1</div>
<div class="t" style="left:323.13px;top:338.90px;font-size:13.95px;color:#1c1c24;transform:scaleX(1.0667);">2</div>
<div class="t" style="left:323.13px;top:406.90px;font-size:13.95px;color:#1c1c24;transform:scaleX(1.0667);">3</div>
<div class="t" style="left:324.20px;top:473.90px;font-size:13.95px;color:#1c1c24;transform:scaleX(0.8000);">4</div>
<div class="t" style="left:323.13px;top:540.90px;font-size:13.95px;color:#1c1c24;transform:scaleX(1.0667);">5</div>
<div class="t" style="left:323.13px;top:608.90px;font-size:13.95px;color:#1c1c24;transform:scaleX(1.0667);">6</div>
<div class="t" style="left:323.13px;top:675.90px;font-size:13.95px;color:#1c1c24;transform:scaleX(1.0667);">7</div>
<div class="t" style="left:323.13px;top:743.90px;font-size:13.95px;color:#1c1c24;transform:scaleX(1.0667);">8</div>
<div class="t" style="left:323.13px;top:810.90px;font-size:13.95px;color:#1c1c24;transform:scaleX(1.0667);">9</div>
<div class="t" style="left:323.24px;top:877.90px;font-size:13.95px;color:#1c1c24;transform:scaleX(0.9643);">10</div>
<div class="t" style="left:323.16px;top:945.90px;font-size:13.95px;color:#1c1c24;transform:scaleX(1.0385);">11</div>
<div class="t" style="left:323.24px;top:1012.90px;font-size:13.95px;color:#1c1c24;transform:scaleX(0.9643);">12</div>
<div class="t" style="left:323.24px;top:1080.90px;font-size:13.95px;color:#1c1c24;transform:scaleX(0.9643);">13</div>
<div class="t" style="left:323.24px;top:1147.90px;font-size:13.95px;color:#1c1c24;transform:scaleX(0.9643);">14</div>
<div class="a" style="left:322px;top:125px;width:2223px;height:1px;background:#a9abad"></div>
<div class="a" style="left:346px;top:151px;width:2154px;height:1092px;background:#777"></div>
<div class="t" style="left:358.50px;top:1069.50px;font-size:13.81px;color:#b2b2b2;transform:scaleX(1.0342);">Arrow Keys:</div>
<div class="t" style="left:448.78px;top:1069.50px;font-size:13.81px;color:#b2b2b2;transform:scaleX(1.0224);">move 1mm</div>
<div class="t" style="left:357.42px;top:1087.15px;font-size:13.81px;color:#b2b2b2;transform:scaleX(1.0821);">Ctrl+Arrow:</div>
<div class="t" style="left:448.79px;top:1087.15px;font-size:13.81px;color:#b2b2b2;transform:scaleX(1.0081);">move 1cm</div>
<div class="t" style="left:357.42px;top:1104.80px;font-size:13.81px;color:#b2b2b2;transform:scaleX(1.0811);">Shift+Arrow:</div>
<div class="t" style="left:448.74px;top:1104.80px;font-size:13.81px;color:#b2b2b2;transform:scaleX(1.0645);">scale</div>
<div class="t" style="left:357.43px;top:1122.45px;font-size:13.81px;color:#b2b2b2;transform:scaleX(1.0732);">Ctrl+H:</div>
<div class="t" style="left:448.73px;top:1122.45px;font-size:13.81px;color:#b2b2b2;transform:scaleX(1.0676);">center horizontally</div>
<div class="t" style="left:357.45px;top:1140.10px;font-size:13.81px;color:#b2b2b2;transform:scaleX(1.0476);">Ctrl+G:</div>
<div class="t" style="left:448.73px;top:1140.10px;font-size:13.81px;color:#b2b2b2;transform:scaleX(1.0684);">center vertically</div>
<div class="t" style="left:357.45px;top:1157.75px;font-size:13.81px;color:#b2b2b2;transform:scaleX(1.0476);">Ctrl+Q:</div>
<div class="t" style="left:448.72px;top:1157.75px;font-size:13.81px;color:#b2b2b2;transform:scaleX(1.0752);">stretch to full width</div>
<div class="t" style="left:357.45px;top:1175.40px;font-size:13.81px;color:#b2b2b2;transform:scaleX(1.0488);">Ctrl+E:</div>
<div class="t" style="left:448.74px;top:1175.40px;font-size:13.81px;color:#b2b2b2;transform:scaleX(1.0588);">stretch to full height</div>
<div class="t" style="left:357.45px;top:1193.05px;font-size:13.81px;color:#b2b2b2;transform:scaleX(1.0488);">Ctrl+P:</div>
<div class="t" style="left:448.75px;top:1193.05px;font-size:13.81px;color:#b2b2b2;transform:scaleX(1.0521);">Preview</div>
<div class="t" style="left:357.44px;top:1210.70px;font-size:13.81px;color:#b2b2b2;transform:scaleX(1.0588);">Ctrl+Home:</div>
<div class="t" style="left:449.80px;top:1210.70px;font-size:13.81px;color:#b2b2b2;transform:scaleX(1.0225);">To Foreground</div>
<div class="t" style="left:357.46px;top:1228.35px;font-size:13.81px;color:#b2b2b2;transform:scaleX(1.0357);">Ctrl+End:</div>
<div class="t" style="left:449.80px;top:1228.35px;font-size:13.81px;color:#b2b2b2;transform:scaleX(1.0110);">To Background</div>
<div class="a" style="left:714px;top:201px;width:1417px;height:999px;background:#fff;border-left:1px solid #5d6464;border-top:1px solid #5d6464;box-shadow:3px 3px 3px 2.5px #161616, 0 0 3px 0.5px rgba(0,0,0,0.4)"></div>
<svg style="left:715px;top:202px" width="1416" height="998" viewBox="0 0 1416 998">
<defs><linearGradient id="rg" x1="0" y1="748.8" x2="588.4000000000001" y2="0" gradientUnits="userSpaceOnUse">
<stop offset="0" stop-color="#e3412f"/><stop offset="0.5" stop-color="#c42a22"/><stop offset="1" stop-color="#a72826"/></linearGradient></defs>
<path d="M0,0 L428.79999999999995,0 L577.4000000000001,148.3 Q588.4000000000001,159.60000000000002 577.4000000000001,170.60000000000002 L0,748.8 Z" fill="url(#rg)"/>
</svg>
<div class="t" style="left:804.13px;top:316.50px;font-size:65.41px;font-weight:bold;color:#ffffff;transform:scaleX(0.7687);">RACE</div>
<div class="t" style="left:1022.13px;top:316.50px;font-size:65.41px;font-weight:bold;color:#ffffff;transform:scaleX(0.7687);">RESULT</div>
<svg style="left:0;top:0" width="1" height="1"><path d="M958.2,297.2 L958.2,336.2 L974.1,353.2 L974.1,289.9 L1011.8,317.9 L1011.8,360.5 L996,377.6 L996,322.8 Z" fill="none" stroke="#fff" stroke-width="3.6" stroke-linejoin="round"/></svg>
<div class="t" style="left:805.37px;top:383.50px;font-size:20.35px;color:#ffffff;transform:scaleX(1.0653);">Precision · Passion · German Engineering</div>
<svg style="left:0;top:0" width="1" height="1"><path d="M781.5,202V1200M848.5,202V1200M916.5,202V1200M983.5,202V1200M1051.5,202V1200M1118.5,202V1200M1185.5,202V1200M1253.5,202V1200M1320.5,202V1200M1388.5,202V1200M1455.5,202V1200M1523.5,202V1200M1590.5,202V1200M1658.5,202V1200M1725.5,202V1200M1793.5,202V1200M1860.5,202V1200M1927.5,202V1200M1995.5,202V1200M2062.5,202V1200M2130.5,202V1200M715,269.5H2131M715,336.5H2131M715,404.5H2131M715,471.5H2131M715,539.5H2131M715,606.5H2131M715,673.5H2131M715,741.5H2131M715,808.5H2131M715,876.5H2131M715,943.5H2131M715,1010.5H2131M715,1078.5H2131M715,1145.5H2131" stroke="#a8a8a8" stroke-width="1" stroke-dasharray="3 2" fill="none"/></svg>
<div class="a" style="left:774px;top:471px;width:1297px;height:93px;border:1px solid #3c3c3c"></div>
<div class="a" style="left:773px;top:599px;width:1297px;height:75px;border:1px solid #3c3c3c"></div>
<div class="a" style="left:773px;top:700px;width:1297px;height:75px;border:1px solid #3c3c3c"></div>
<div class="a" style="left:773px;top:815px;width:1297px;height:75px;border:1px solid #3c3c3c"></div>
<div class="a" style="left:773px;top:929px;width:1297px;height:75px;border:1px solid #3c3c3c"></div>
<div class="a" style="left:773px;top:1044px;width:1297px;height:75px;border:1px solid #3c3c3c"></div>
<div class="t" style="left:1230.79px;top:483.30px;font-size:69.33px;font-weight:bold;color:#000;transform:scaleX(0.9610);">Event.Name</div>
<div class="t" style="left:1242.03px;top:609.80px;font-size:52.91px;font-weight:bold;color:#000;transform:scaleX(0.9888);">FirstLastname</div>
<div class="t" style="left:1365.86px;top:711.50px;font-size:51.31px;color:#000;transform:scaleX(1.0460);">Club</div>
<div class="t" style="left:1252.92px;top:824.90px;font-size:54.8px;color:#000;transform:scaleX(0.9594);">Contest.Name</div>
<div class="t" style="left:1364.00px;top:939.70px;font-size:52.91px;color:#000;">Time</div>
<div class="t" style="left:1275.01px;top:1052.60px;font-size:43.31px;font-weight:bold;color:#000;transform:scaleX(0.9932);">GenderRank.p</div>
<svg style="left:0;top:0" width="1" height="1">
<g fill="none" stroke="#8c8c8c" stroke-width="2"><circle cx="2522.5" cy="171.5" r="9.5"/><path d="M2529.5,178.5 L2536,185"/><path d="M2518,171.5 H2527 M2522.5,167 V176"/></g>
<g fill="none" stroke="#8c8c8c" stroke-width="2"><circle cx="2522.5" cy="216.5" r="9.5"/><path d="M2529.5,223.5 L2536,230"/><path d="M2518,216.5 H2527"/></g>
<path d="M2509.8,243 L2523.8,243 L2531,250.5 L2531,276 L2509.8,276 Z" fill="#8c8c8c"/><path d="M2523.3,243.5 L2523.3,251 L2530.5,251" fill="none" stroke="#efefef" stroke-width="1"/><rect x="2533.4" y="249" width="4.4" height="27" fill="#8c8c8c"/><path d="M2535.5,252 H2537.8 M2535.5,256 H2537.8 M2535.5,260 H2537.8 M2535.5,264 H2537.8 M2535.5,268 H2537.8 M2535.5,272 H2537.8" stroke="#d8d8d8" stroke-width="0.7"/><path d="M2509.8,291.2 L2523,291.2 L2529.8,298 L2529.8,319 L2509.8,319 Z" fill="#8c8c8c"/><path d="M2522.5,291.7 L2522.5,298.5 L2529.3,298.5" fill="none" stroke="#efefef" stroke-width="1"/><path d="M2512.5,301 H2523 M2512.5,306 H2520 M2512.5,311 H2518.5" stroke="#efefef" stroke-width="1.4"/><circle cx="2527.4" cy="311.5" r="5" fill="#8c8c8c" stroke="#efefef" stroke-width="1.6"/><path d="M2531.5,315.5 L2537.8,321.5" stroke="#8c8c8c" stroke-width="1.8"/><rect x="2500" y="329" width="45" height="1" fill="#d0d0d0"/><g fill="none" stroke="#8c8c8c" stroke-width="1.8"><rect x="2512" y="345.2" width="24.5" height="16" rx="3"/></g><circle cx="2519.8" cy="351" r="2.6" fill="#8c8c8c"/><path d="M2514.5,360.5 C2514.5,355 2525,355 2525,360.5Z" fill="#8c8c8c"/><rect x="2527" y="350" width="6" height="1.8" fill="#8c8c8c"/><rect x="2527" y="354.5" width="6" height="1.8" fill="#8c8c8c"/><rect x="2510.5" y="387.3" width="26.5" height="21" rx="6" fill="#9aa3b5"/><rect x="2526.6" y="383" width="3" height="29.5" fill="#efefef"/><rect x="2527.2" y="383.6" width="1.8" height="28.3" fill="#9aa3b5"/><path d="M2514.2,391.6 H2523.8 V394 M2514.2,391.6 V394 M2519,391.6 V402.2 M2516.8,402.2 H2521.2" stroke="#eef0f4" stroke-width="1.8" fill="none"/>
<g fill="none" stroke="#8c8c8c" stroke-width="2.2"><rect x="2509" y="431" width="31" height="24"/></g><path d="M2513,452 L2520,444 L2525,448 L2529,443 L2536,452 Z" fill="#8c8c8c"/><circle cx="2530" cy="437.5" r="2" fill="#8c8c8c"/>
<g fill="none" stroke="#8c8c8c" stroke-width="2.2"><rect x="2509" y="481" width="25" height="21"/><path d="M2513,477 L2538,477 L2538,499"/></g><path d="M2510,500 L2517,490 L2522,495 L2526,491 L2533,500 Z" fill="#8c8c8c"/><circle cx="2527" cy="485" r="3" fill="#8c8c8c"/><path d="M2510,485 L2522,499" stroke="#8c8c8c" stroke-width="2"/>
<rect x="2508" y="523" width="32" height="20" fill="#8c8c8c"/>
<circle cx="2524" cy="578" r="16" fill="#8c8c8c"/>
<path d="M2512.5,633.5 L2535.5,611.5" stroke="#8c8c8c" stroke-width="2.2" stroke-linecap="round"/>
<g fill="#8c8c8c"><rect x="2508" y="657" width="2" height="20"/><rect x="2511.5" y="657" width="1" height="20"/><rect x="2514" y="657" width="2.5" height="20"/><rect x="2518" y="657" width="1" height="20"/><rect x="2520.5" y="657" width="2" height="20"/><rect x="2524" y="657" width="1" height="20"/><rect x="2526.5" y="657" width="2.5" height="20"/><rect x="2530.5" y="657" width="1" height="20"/><rect x="2533" y="657" width="2" height="20"/><rect x="2537" y="657" width="1" height="20"/><rect x="2539" y="657" width="1.5" height="20"/></g>
<rect x="2500" y="690" width="45" height="1" fill="#d8d8d8"/>
<rect x="2501" y="691" width="44" height="30" fill="#9ec5ea"/>
</svg>
<div class="t" style="left:2518.80px;top:696.00px;font-size:20.35px;color:#111;transform:scaleX(0.7000);">1</div>
<div class="t" style="left:2517.30px;top:728.00px;font-size:20.35px;color:#111;transform:scaleX(0.9500);">2</div>
</body></html>
